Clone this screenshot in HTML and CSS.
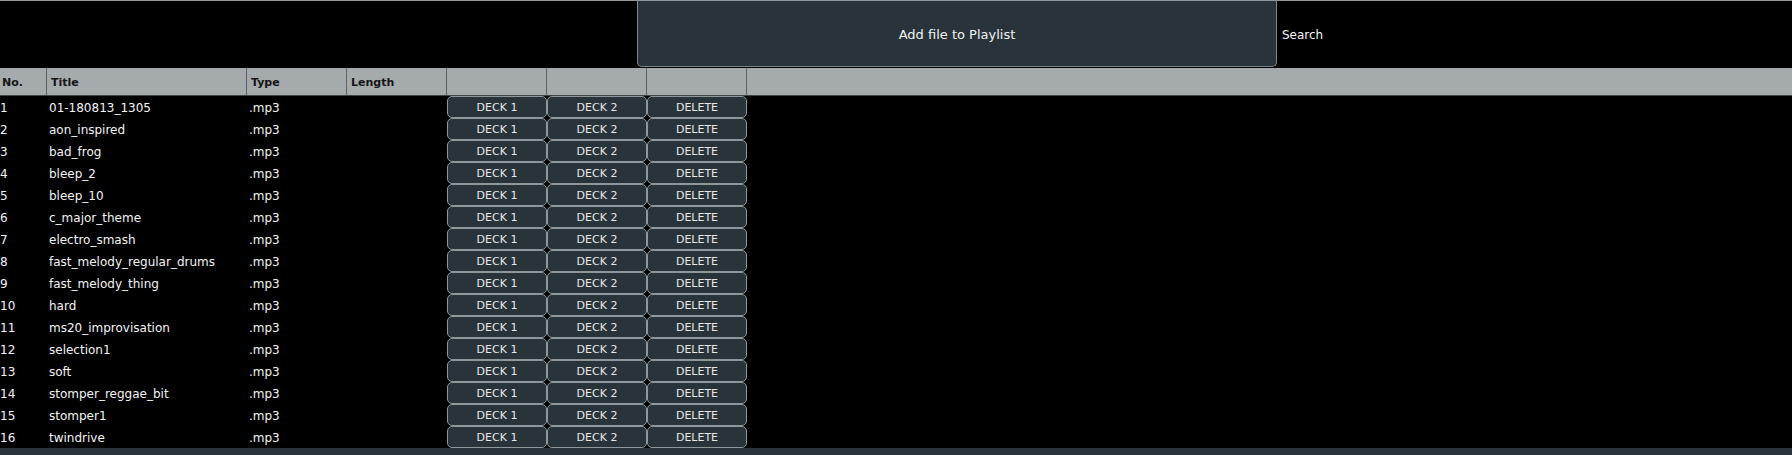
FILE: index.html
```html
<!DOCTYPE html>
<html>
<head>
<meta charset="utf-8">
<link rel="stylesheet" href="styles.css">
</head>
<body>
<div class="app">
  <div class="toolbar">
    <div class="toolbar-spacer"></div>
    <button class="add-btn">Add file to Playlist</button>
    <label class="search-label" for="search">Search</label>
    <input id="search" class="search-input" type="text">
  </div>
  <div class="table">
    <div class="row header">
      <div class="cell hcell first">No.</div>
      <div class="cell hcell">Title</div>
      <div class="cell hcell">Type</div>
      <div class="cell hcell">Length</div>
      <div class="cell hcell"></div>
      <div class="cell hcell"></div>
      <div class="cell hcell"></div>
      <div class="hfill"></div>
    </div>
    <div class="body" id="rows"></div>
  </div>
  <div class="bottom-bar"></div>
</div>
<script>
var names = ["01-180813_1305","aon_inspired","bad_frog","bleep_2","bleep_10","c_major_theme","electro_smash","fast_melody_regular_drums","fast_melody_thing","hard","ms20_improvisation","selection1","soft","stomper_reggae_bit","stomper1","twindrive"];
var html = "";
names.forEach(function(n, i){
  html += '<div class="row">' +
    '<div class="cell first">' + (i+1) + '</div>' +
    '<div class="cell">' + n + '</div>' +
    '<div class="cell">.mp3</div>' +
    '<div class="cell"></div>' +
    '<button class="row-btn">DECK 1</button>' +
    '<button class="row-btn">DECK 2</button>' +
    '<button class="row-btn">DELETE</button>' +
    '</div>';
});
document.getElementById("rows").innerHTML = html;
</script>
</body>
</html>
```
FILE: styles.css
```css
html, body {
  margin: 0;
  padding: 0;
  background: #000;
}
body {
  font-family: "DejaVu Sans", sans-serif;
  color: #fff;
  width: 1792px;
  height: 455px;
  overflow: hidden;
}
.app {
  display: flex;
  flex-direction: column;
  height: 455px;
}
.toolbar {
  display: flex;
  align-items: stretch;
  height: 67px;
  border-top: 1px solid #8e989b;
}
.toolbar-spacer {
  width: 637px;
  flex: none;
}
.add-btn {
  width: 640px;
  flex: none;
  height: 66px;
  background: #28333a;
  border: 1px solid #7d878a;
  border-top: none;
  border-radius: 0 0 5px 5px;
  color: #f2f2f2;
  font-family: "DejaVu Sans", sans-serif;
  font-size: 13px;
  padding: 2px 0 0 0;
  margin: 0;
}
.search-label {
  display: flex;
  align-items: center;
  padding-left: 5px;
  padding-top: 0;
  font-size: 12px;
  color: #f5f5f5;
}
.search-input {
  flex: 1;
  background: #000;
  border: none;
  outline: none;
  margin: 0;
}
.table {
  display: flex;
  flex-direction: column;
}
.row {
  display: grid;
  grid-template-columns: 47px 200px 100px 100px 100px 100px 100px 1fr;
  height: 22px;
}
.header {
  height: 27px;
  background: #a5aaac;
  border-bottom: 1px solid #3e4446;
}
.cell {
  display: flex;
  align-items: center;
  padding-left: 2px;
  padding-top: 1px;
  font-size: 12px;
  color: #f4f4f4;
  white-space: nowrap;
  overflow: hidden;
  box-sizing: border-box;
}
.cell.first {
  padding-left: 0;
}
.hcell {
  border-right: 1px solid #5d6366;
  font-weight: bold;
  font-size: 11px;
  color: #151515;
  padding-left: 4px;
}
.hcell.first {
  padding-left: 2px;
}
.row-btn {
  box-sizing: border-box;
  height: 22px;
  width: 100px;
  margin: 0;
  padding: 0;
  background: #28333a;
  border: 1px solid #8e989b;
  border-radius: 5px;
  color: #e8e8e8;
  font-family: "DejaVu Sans", sans-serif;
  font-size: 11px;
}
.bottom-bar {
  flex: 1;
  background: #28333a;
}
```
